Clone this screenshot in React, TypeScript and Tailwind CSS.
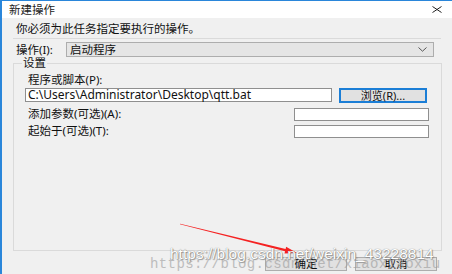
export default function App() {
  const ui = "font-['Noto_Sans','Noto_Sans_CJK_SC',sans-serif] text-[11.5px] leading-[14px] text-[#111]";

  return (
    <div
      className={`relative w-[452px] h-[274px] overflow-hidden bg-[#f0f0f0] border-t border-l-2 border-[#2a86da] flex flex-col ${ui}`}
    >
      {/* Title bar */}
      <div className="h-[17px] bg-white flex items-center justify-between pl-[7px] pr-[10px] shrink-0">
        <span className="text-[11.5px] text-[#222]">新建操作</span>
        <svg width="10" height="7" viewBox="0 0 10 7">
          <path d="M0.5 0.5 L9.5 6.5 M9.5 0.5 L0.5 6.5" stroke="#222" strokeWidth="1" />
        </svg>
      </div>

      {/* Description */}
      <div className="pt-[4px] pl-[14px]">你必须为此任务指定要执行的操作。</div>
      <div className="mt-[2px] ml-[11px] w-[428px] h-px bg-[#dadada]" />

      {/* Operation row */}
      <div className="mt-[3px] flex items-center pl-[14px]">
        <span className="w-[50px]">操作(I):</span>
        <div className="w-[368px] h-[15px] bg-[#e5e5e5] border border-[#adadad] flex items-center justify-between pl-[3px] pr-[6px]">
          <span>启动程序</span>
          <svg width="9" height="5" viewBox="0 0 9 5">
            <polyline points="0.5,0.5 4.5,4.2 8.5,0.5" fill="none" stroke="#555" strokeWidth="1" />
          </svg>
        </div>
      </div>

      {/* Settings group */}
      <div className="relative mt-[6px] ml-[11px] w-[429px] h-[188px] border border-[#dadada]">
        <span className="absolute -top-[8px] left-[8px] px-[1px] bg-[#f0f0f0]">设置</span>

        <div className="pt-[9px] pl-[14px]">程序或脚本(P):</div>
        <div className="mt-[1px] flex items-start ml-[11px]">
          <div className="w-[307px] h-[14px] bg-white border border-[#8f8f8f] pl-[2px] text-[12px] leading-[12px] flex items-center">
            C:\Users\Administrator\Desktop\qtt.bat
          </div>
          <div className="ml-[7px] w-[88px] h-[15px] bg-[#e1e1e1] border-2 border-[#1b7ed6] flex items-center justify-center text-[11px] leading-[11px]">
            浏览(R)...
          </div>
        </div>

        <div className="mt-[4px] flex items-center justify-between pl-[14px] pr-[12px]">
          <span>添加参数(可选)(A):</span>
          <div className="w-[135px] h-[13px] bg-white border border-[#8f8f8f]" />
        </div>
        <div className="mt-[3px] flex items-center justify-between pl-[14px] pr-[12px]">
          <span>起始于(可选)(T):</span>
          <div className="w-[135px] h-[13px] bg-white border border-[#8f8f8f]" />
        </div>
      </div>

      {/* Buttons */}
      <div className="mt-[6px] flex justify-end gap-[8px] pr-[15px]">
        <div className="w-[82px] h-[14px] bg-[#e1e1e1] border border-[#adadad] flex items-center justify-center leading-[12px]">
          确定
        </div>
        <div className="w-[82px] h-[14px] bg-[#e1e1e1] border border-[#adadad] flex items-center justify-center leading-[12px]">
          取消
        </div>
      </div>

      {/* Red arrow annotation */}
      <svg className="absolute -left-[2px] -top-px pointer-events-none" width="452" height="274" viewBox="0 0 452 274">
        <polygon
          points="180.06,223.76 285.6,248.9 286.1,246.7 297,253 284.5,253.5 285.0,251.3 179.94,224.24"
          fill="#f52222"
        />
      </svg>

      {/* Watermarks */}
      <span className="absolute left-[148px] top-[255px] font-['Liberation_Mono',monospace] text-[14px] leading-[16px] text-[#9a9a9a] opacity-60 whitespace-nowrap tracking-[0.4px]">
        https://blog.csdn.net/xiaoxiaoxiu
      </span>
      <span className="absolute left-[168px] top-[244px] font-['Liberation_Sans',sans-serif] text-[15.5px] leading-[18px] text-white whitespace-nowrap [text-shadow:0_0_1px_#666,1px_1px_1px_#999]">
        https://blog.csdn.net/weixin_43228814
      </span>
    </div>
  );
}
